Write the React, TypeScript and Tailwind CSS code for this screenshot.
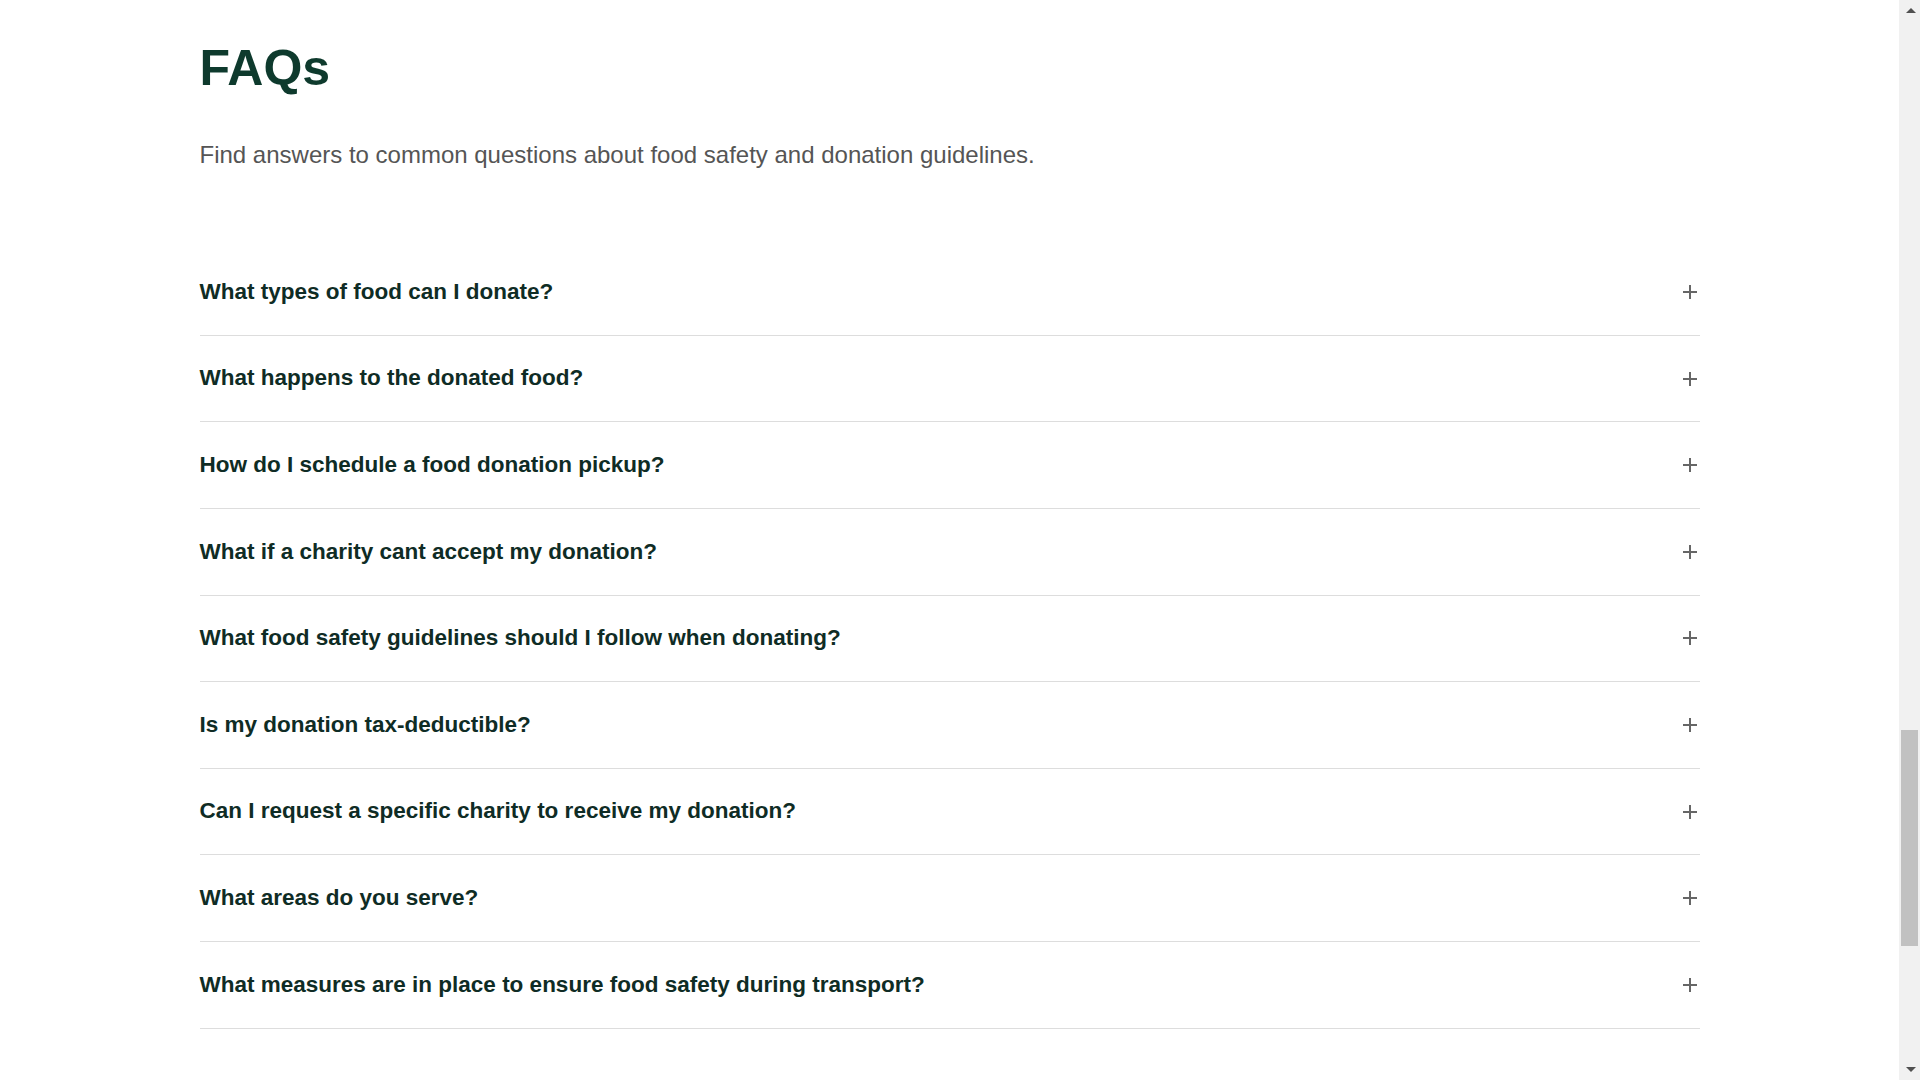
import React from "react";

const questions = [
  "What types of food can I donate?",
  "What happens to the donated food?",
  "How do I schedule a food donation pickup?",
  "What if a charity cant accept my donation?",
  "What food safety guidelines should I follow when donating?",
  "Is my donation tax-deductible?",
  "Can I request a specific charity to receive my donation?",
  "What areas do you serve?",
  "What measures are in place to ensure food safety during transport?",
];

function PlusIcon() {
  return (
    <svg width="16" height="16" viewBox="0 0 16 16" fill="none" aria-hidden="true">
      <path d="M8 1v14M1 8h14" stroke="#666666" strokeWidth="2" />
    </svg>
  );
}

export default function App() {
  return (
    <div
      className="flex h-[1080px] w-full overflow-hidden bg-white"
      style={{ fontFamily: '"Liberation Sans", Arial, sans-serif' }}
    >
      <main className="flex-1 min-w-0">
        <div className="mx-auto w-[1500px] pt-[38px]">
          <h1 className="text-[50px] leading-[60px] font-bold text-[#0e3a2d]">FAQs</h1>
          <p className="mt-[41.5px] text-[24px] leading-[30px] text-[#555555]">
            Find answers to common questions about food safety and donation guidelines.
          </p>
          <div className="mt-[79.8px]">
            {questions.map((q) => (
              <div
                key={q}
                className="flex h-[86.6px] items-center justify-between border-b border-[#dddddd] pr-[2px]"
              >
                <span className="text-[22.5px] leading-none font-bold text-[#0f2c25]">{q}</span>
                <PlusIcon />
              </div>
            ))}
          </div>
        </div>
      </main>
      <div className="flex w-[21px] shrink-0 flex-col bg-[#f1f1f1]">
        <div className="flex h-[21px] items-center justify-center pl-[2px]">
          <div className="h-0 w-0 border-x-[5px] border-b-[5px] border-x-transparent border-b-[#505050]" />
        </div>
        <div className="mt-[709px] ml-[2px] h-[216px] w-[17px] bg-[#c1c1c1]" />
        <div className="flex-1" />
        <div className="flex h-[21px] items-center justify-center pl-[2px]">
          <div className="h-0 w-0 border-x-[5px] border-t-[5px] border-x-transparent border-t-[#505050]" />
        </div>
      </div>
    </div>
  );
}
